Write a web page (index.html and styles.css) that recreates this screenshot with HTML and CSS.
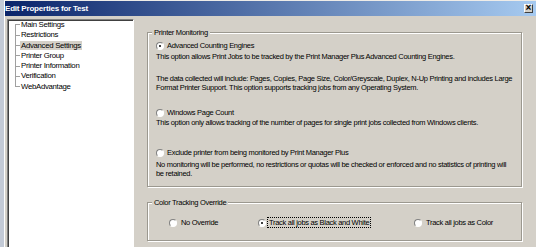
FILE: index.html
```html
<!DOCTYPE html>
<html lang="en">
<head>
    <meta charset="UTF-8">
    <title>Edit Properties for Test</title>
    <link rel="stylesheet" href="styles.css">
</head>
<body>
    <div class="desk"></div>
    <div class="window">
        <div class="titlebar">
            <span class="title">Edit Properties for Test</span>
            <span class="close">&#215;</span>
        </div>

        <div class="content">
            <ul class="tree">
                <li>Main Settings</li>
                <li>Restrictions</li>
                <li><span class="selected">Advanced Settings</span></li>
                <li>Printer Group</li>
                <li>Printer Information</li>
                <li>Verification</li>
                <li>WebAdvantage</li>
            </ul>

            <div class="panel">
                <fieldset class="group monitoring">
                    <legend>Printer Monitoring</legend>
                    <div class="group-body">
                        <div class="option opt-first"><span class="radio checked"></span>Advanced Counting Engines</div>
                        <p class="desc desc-first">This option allows Print Jobs to be tracked by the Print Manager Plus Advanced Counting Engines.</p>
                        <p class="desc desc-data">The data collected will include: Pages, Copies, Page Size, Color/Greyscale, Duplex, N-Up Printing and includes Large<br>Format Printer Support. This option supports tracking jobs from any Operating System.</p>

                        <div class="option opt-windows"><span class="radio"></span>Windows Page Count</div>
                        <p class="desc desc-windows">This option only allows tracking of the number of pages for single print jobs collected from Windows clients.</p>

                        <div class="option opt-exclude"><span class="radio"></span>Exclude printer from being monitored by Print Manager Plus</div>
                        <p class="desc desc-exclude">No monitoring will be performed, no restrictions or quotas will be checked or enforced and no statistics of printing will<br>be retained.</p>
                    </div>
                </fieldset>

                <fieldset class="group color">
                    <legend>Color Tracking Override</legend>
                    <div class="choices">
                        <div class="choice"><span class="radio"></span>No Override</div>
                        <div class="choice"><span class="radio checked"></span><span class="focus">Track all jobs as Black and White</span></div>
                        <div class="choice"><span class="radio"></span>Track all jobs as Color</div>
                    </div>
                </fieldset>
            </div>
        </div>
    </div>
</body>
</html>
```

FILE: styles.css
```css
body {
  margin: 0;
  width: 536px;
  height: 247px;
  overflow: hidden;
  display: flex;
  background: #d4d0c8;
  font-family: "Liberation Sans", Arial, sans-serif;
  font-size: 7.5px;
  letter-spacing: -0.3px;
  color: #000;
}

.desk {
  width: 4px;
  background: #c3cad6;
}

.window {
  flex: 1;
  display: flex;
  flex-direction: column;
  border-top: 1px solid #eeece8;
  border-left: 1px solid #fff;
}

.titlebar {
  height: 15px;
  display: flex;
  align-items: center;
  background: linear-gradient(to right, #0a246a, #a6caf0);
  color: #fff;
  font-size: 8px;
  font-weight: bold;
  letter-spacing: -0.2px;
}

.close {
  margin-left: auto;
  margin-right: 3px;
  width: 9px;
  height: 9px;
  box-sizing: border-box;
  background: #d4d0c8;
  border: 1px solid;
  border-color: #fff #404040 #404040 #fff;
  color: #000;
  font-size: 10px;
  font-weight: bold;
  line-height: 6px;
  letter-spacing: 0;
  text-align: center;
}

.content {
  flex: 1;
  display: flex;
  padding: 3px 0 0 2px;
  min-height: 0;
}

/* tree on the left */
.tree {
  width: 127px;
  box-sizing: border-box;
  margin: 0 0 -4px 0;
  padding: 0 0 0 7px;
  list-style: none;
  background: #fff;
  border: 1px solid;
  border-color: #808080 #fff #fff #808080;
  box-shadow: inset 1px 1px #404040;
  font-size: 7.8px;
}

.tree li {
  line-height: 10.3px;
  white-space: nowrap;
  background: linear-gradient(#a0a0a0, #a0a0a0) no-repeat 0 0 / 1px 100%;
}

.tree li:first-child {
  background-position: 0 100%;
  background-size: 1px 50%;
}

.tree li:last-child {
  background-size: 1px 50%;
}

.tree li::before {
  content: "";
  display: inline-block;
  width: 5px;
  height: 1px;
  margin-right: 1px;
  background: #a0a0a0;
  vertical-align: middle;
}

.tree .selected {
  background: #d4d0c8;
  padding: 0 1px;
  margin-left: -1px;
}

/* right side */
.panel {
  flex: 1;
  padding: 9px 0 0 13px;
}

.group {
  margin: 0;
  width: 375px;
  min-width: 0;
  box-sizing: border-box;
  padding: 0 4px;
  border: 1px solid #9b988f;
  box-shadow: inset 1px 1px #fff, 1px 1px #fff;
}

.group legend {
  padding: 0 2px;
  line-height: 9px;
  background: #d4d0c8;
}

.group-body {
  padding: 4px 0 8px 4px;
}

.option,
.desc {
  margin: 0;
  line-height: 9px;
  white-space: nowrap;
}

.desc-first { margin-top: 2px; }
.desc-data { margin-top: 13px; }
.opt-windows { margin-top: 16px; }
.desc-windows { margin-top: 1px; }
.opt-exclude { margin-top: 21px; }
.desc-exclude { margin-top: 3px; }

.radio {
  display: inline-block;
  width: 8px;
  height: 8px;
  box-sizing: border-box;
  border-radius: 50%;
  border: 1px solid;
  border-color: #808080 #fff #fff #808080;
  background: #fff;
  vertical-align: middle;
  margin: -1px 3px 0 0;
}

.radio.checked::after {
  content: "";
  display: block;
  width: 2px;
  height: 2px;
  margin: 2px;
  border-radius: 50%;
  background: #000;
}

.color {
  margin-top: 11px;
}

.choices {
  display: grid;
  grid-template-columns: 89px 156px auto;
  padding: 10px 0 12px 17px;
  line-height: 11px;
  white-space: nowrap;
}

.choice .radio {
  margin-right: 4px;
}

.choice .focus {
  border: 1px dotted #000;
  padding: 0 1px;
  margin-left: -3px;
}
```
